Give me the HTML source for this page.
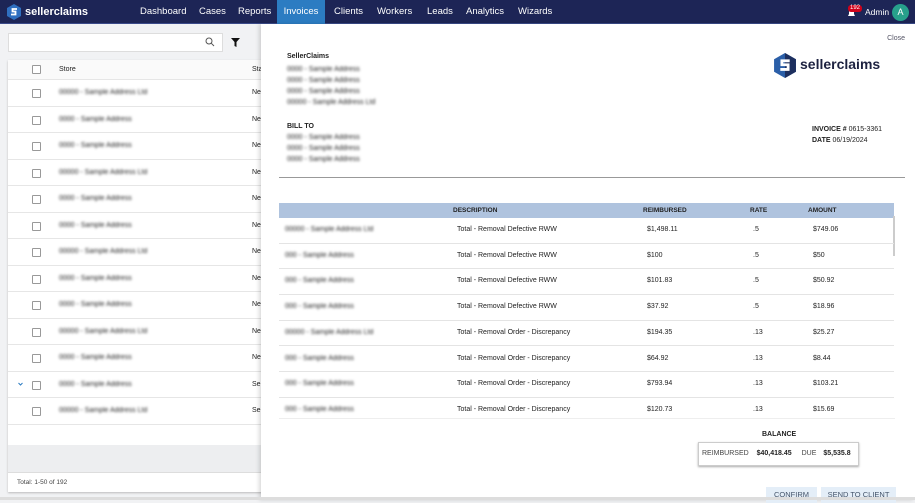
<!DOCTYPE html>
<html><head><style>
*{box-sizing:border-box;margin:0;padding:0}
body{width:915px;height:500px;overflow:hidden;font-family:"Liberation Sans",sans-serif;background:#f1f2f4;position:relative;font-size:8px;color:#222}
.nav{position:absolute;left:0;top:0;width:915px;height:24px;background:#1d2556;border-bottom:1px solid #3a4a8a}
.nav .it{position:absolute;top:0;height:24px;line-height:24px;color:#fff;font-size:9.5px}
.blur{filter:blur(1.4px);color:#999}
.left{position:absolute;left:8px;top:60px;width:262px;height:432px;background:#fff;box-shadow:0 1px 2px #bbb}
.row{position:absolute;left:0;width:262px;height:26.5px;border-bottom:1px solid #e6e6e6}
.cb{position:absolute;left:24px;width:9px;height:9px;border:1px solid #999;border-radius:1px;background:#fff}
.panel{position:absolute;left:261px;top:24px;width:654px;height:476px;background:#fff;box-shadow:-2px 0 4px rgba(0,0,0,.15)}
.t{position:absolute;font-size:7px;color:#222}
.trow{position:absolute;left:279px;width:615px;height:25.6px;border-bottom:1px solid #e4e4e4}
.btn{position:absolute;top:487px;height:16px;background:#e4eef8;color:#44546a;font-size:7.5px;line-height:16px;text-align:center}
</style></head><body>
<div class="nav">
 <svg style="position:absolute;left:7px;top:4px" width="14" height="16" viewBox="0 0 14 16"><path d="M7 0L14 4V12L7 16L0 12V4Z" fill="#2f6fc0"/><path d="M10 5H5.5V7.5H8.5V10.5H4" stroke="#fff" stroke-width="1.8" fill="none"/></svg>
 <div class="it" style="left:25px;font-weight:bold;font-size:11px">sellerclaims</div>
 <div class="it" style="left:140px">Dashboard</div>
 <div class="it" style="left:199px">Cases</div>
 <div class="it" style="left:238px">Reports</div>
 <div class="it" style="left:277px;width:48px;background:#2c7cc2;text-align:center;border-bottom:1px solid #2c7cc2">Invoices</div>
 <div class="it" style="left:334px">Clients</div>
 <div class="it" style="left:377px">Workers</div>
 <div class="it" style="left:427px">Leads</div>
 <div class="it" style="left:466px">Analytics</div>
 <div class="it" style="left:518px">Wizards</div>
 <svg style="position:absolute;left:847px;top:8px" width="9" height="10" viewBox="0 0 9 10"><path d="M1 8H8L7 6V4A2.5 2.5 0 0 0 2 4V6Z" fill="#fff"/></svg>
 <div style="position:absolute;left:848px;top:5px;background:#d0021b;color:#fff;font-size:6px;padding:0 2px;border-radius:3px;line-height:7px">192</div>
 <div class="it" style="left:865px;font-size:8.5px">Admin</div>
 <div style="position:absolute;left:892px;top:4px;width:17px;height:17px;border-radius:50%;background:#27a08b;color:#fff;font-size:9px;line-height:17px;text-align:center">A</div>
</div>
<div style="position:absolute;left:8px;top:33px;width:215px;height:19px;background:#fff;border:1px solid #ddd"></div>
<svg style="position:absolute;left:205px;top:37px" width="10" height="10" viewBox="0 0 10 10"><circle cx="4" cy="4" r="3" stroke="#555" fill="none"/><path d="M6.2 6.2L9 9" stroke="#555"/></svg>
<svg style="position:absolute;left:231px;top:38px" width="9" height="9" viewBox="0 0 9 9"><path d="M0 0H9L5.5 4V9L3.5 8V4Z" fill="#111"/></svg>
<div class="left">
 <div class="row" style="top:0;height:20px;background:#fafafa"><div class="cb" style="top:5px"></div><div class="t" style="left:51px;top:6px">Store</div><div class="t" style="left:244px;top:6px">Sta</div></div>
 <div id="rows"></div>
 <div style="position:absolute;left:0;top:385px;width:262px;height:27px;background:#edeef0"></div>
 <div style="position:absolute;left:0;top:412px;width:262px;height:20px;border-top:1px solid #ddd"><div class="t" style="left:9px;top:6px;font-size:6.5px;color:#444">Total: 1-50 of 192</div></div>
</div>
<div class="panel">
 <div class="t" style="right:10px;top:11px;color:#556;font-size:7px">Close</div>
 <div class="t" style="left:26px;top:29px;font-weight:bold;font-size:7px">SellerClaims</div>
 <div class="t blur" style="left:26px;top:40px;line-height:11px">0000 - Sample Address<br>0000 - Sample Address<br>0000 - Sample Address<br>00000 - Sample Address Ltd</div>
 <div class="t" style="left:26px;top:99px;font-weight:bold">BILL TO</div>
 <div class="t blur" style="left:26px;top:108px;line-height:11px">0000 - Sample Address<br>0000 - Sample Address<br>0000 - Sample Address</div>
 <svg style="position:absolute;left:513px;top:29px" width="22" height="25" viewBox="0 0 14 16"><path d="M7 0L14 4V12L7 16L0 12V4Z" fill="#2b5fa8"/><path d="M7 0L14 4V12L7 16Z" fill="#1d2f5e"/><path d="M10 5H5V7.5H9V10.5H4" stroke="#fff" stroke-width="1.8" fill="none"/></svg>
 <div class="t" style="left:539px;top:32px;font-size:14px;font-weight:bold;color:#1d2240">sellerclaims</div>
 <div class="t" style="left:551px;top:100px;line-height:11px"><b>INVOICE #</b> 0615-3361<br><b>DATE</b> 06/19/2024</div>
 <div style="position:absolute;left:18px;top:153px;width:626px;height:1px;background:#999"></div>
</div>
<div style="position:absolute;left:279px;top:203px;width:615px;height:15px;background:#afc3de"></div>
<div class="t" style="left:453px;top:207px;font-size:6.5px;font-weight:bold">DESCRIPTION</div>
<div class="t" style="left:643px;top:207px;font-size:6.5px;font-weight:bold">REIMBURSED</div>
<div class="t" style="left:750px;top:207px;font-size:6.5px;font-weight:bold">RATE</div>
<div class="t" style="left:808px;top:207px;font-size:6.5px;font-weight:bold">AMOUNT</div>
<div style="position:absolute;left:893px;top:216px;width:2px;height:40px;background:#ccc"></div>
<div id="trows"></div>
<div style="position:absolute;left:279px;top:418px;width:616px;height:1px;background:#eee"></div>
<div class="t" style="left:762px;top:431px;font-weight:bold">BALANCE</div>
<div style="position:absolute;left:698px;top:442px;width:161px;height:24px;background:#fff;border:1px solid #ccc;box-shadow:0 1px 2px #aaa"></div>
<div class="t" style="left:702px;top:450px;font-size:7px;color:#444">REIMBURSED <b style="color:#222;margin-left:6px">$40,418.45</b> <span style="margin-left:8px">DUE</span> <b style="color:#222;margin-left:5px">$5,535.8</b></div>
<div class="btn" style="left:766px;width:51px">CONFIRM</div>
<div class="btn" style="left:821px;width:75px">SEND TO CLIENT</div>
<div style="position:absolute;left:0;top:497px;width:915px;height:3px;background:#ddd"></div>
<script>
var r='',st=['Ne','Ne','Ne','Ne','Ne','Ne','Ne','Ne','Ne','Ne','Ne','Se','Se'];
for(var i=0;i<13;i++){var y=20+i*26.5;r+='<div class="row" style="top:'+y+'px"><div class="cb" style="top:9px"></div><div class="t blur" style="left:51px;top:9px">'+(i%3?'0000 - Sample Address':'00000 - Sample Address Ltd')+'</div><div class="t" style="left:244px;top:9px">'+st[i]+'</div>'+(i==11?'<svg style="position:absolute;left:10px;top:10px" width="5" height="4" viewBox="0 0 5 4"><path d="M0.5 1L2.5 3L4.5 1" stroke="#2c7cc2" fill="none"/></svg>':'')+'</div>';}
document.getElementById('rows').innerHTML=r;
var d=[['Total - Removal Defective RWW','$1,498.11','.5','$749.06'],['Total - Removal Defective RWW','$100','.5','$50'],['Total - Removal Defective RWW','$101.83','.5','$50.92'],['Total - Removal Defective RWW','$37.92','.5','$18.96'],['Total - Removal Order - Discrepancy','$194.35','.13','$25.27'],['Total - Removal Order - Discrepancy','$64.92','.13','$8.44'],['Total - Removal Order - Discrepancy','$793.94','.13','$103.21'],['Total - Removal Order - Discrepancy','$120.73','.13','$15.69']];
var s='';for(i=0;i<8;i++){var y=218+i*25.7;var last=i==7;s+='<div class="trow" style="top:'+y+'px;'+(last?'height:'+(418-y)+'px;overflow:hidden;border:0':'')+'"><div class="t blur" style="left:6px;top:8px">'+(i%4==0?'00000 - Sample Address Ltd':'000 - Sample Address')+'</div><div class="t" style="left:178px;top:8px">'+d[i][0]+'</div><div class="t" style="left:368px;top:8px">'+d[i][1]+'</div><div class="t" style="left:474px;top:8px">'+d[i][2]+'</div><div class="t" style="left:534px;top:8px">'+d[i][3]+'</div></div>';}
document.getElementById('trows').innerHTML=s;
</script>
</body></html>
